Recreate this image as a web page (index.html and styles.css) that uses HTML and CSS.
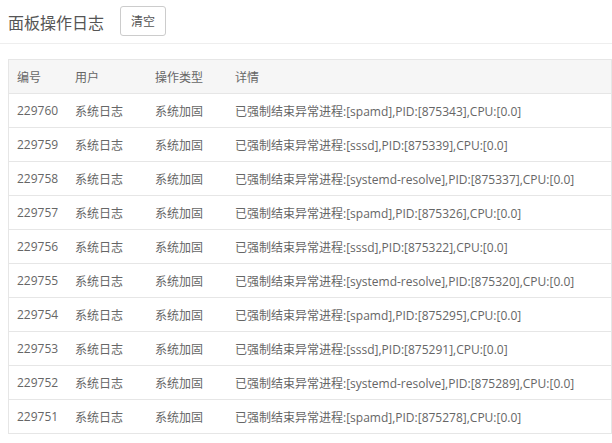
FILE: index.html
```html
<!DOCTYPE html>
<html lang="zh-CN">
<head>
    <meta charset="UTF-8">
    <title>面板操作日志</title>
    <link rel="stylesheet" href="styles.css">
</head>
<body>
    <div class="top-bar">
        <span class="title">面板操作日志</span>
        <button class="btn">清空</button>
    </div>

    <table class="log-table">
        <thead>
            <tr>
                <th class="col-id">编号</th>
                <th class="col-user">用户</th>
                <th class="col-type">操作类型</th>
                <th>详情</th>
            </tr>
        </thead>
        <tbody>
            <tr><td>229760</td><td>系统日志</td><td>系统加固</td><td>已强制结束异常进程:[spamd],PID:[875343],CPU:[0.0]</td></tr>
            <tr><td>229759</td><td>系统日志</td><td>系统加固</td><td>已强制结束异常进程:[sssd],PID:[875339],CPU:[0.0]</td></tr>
            <tr><td>229758</td><td>系统日志</td><td>系统加固</td><td>已强制结束异常进程:[systemd-resolve],PID:[875337],CPU:[0.0]</td></tr>
            <tr><td>229757</td><td>系统日志</td><td>系统加固</td><td>已强制结束异常进程:[spamd],PID:[875326],CPU:[0.0]</td></tr>
            <tr><td>229756</td><td>系统日志</td><td>系统加固</td><td>已强制结束异常进程:[sssd],PID:[875322],CPU:[0.0]</td></tr>
            <tr><td>229755</td><td>系统日志</td><td>系统加固</td><td>已强制结束异常进程:[systemd-resolve],PID:[875320],CPU:[0.0]</td></tr>
            <tr><td>229754</td><td>系统日志</td><td>系统加固</td><td>已强制结束异常进程:[spamd],PID:[875295],CPU:[0.0]</td></tr>
            <tr><td>229753</td><td>系统日志</td><td>系统加固</td><td>已强制结束异常进程:[sssd],PID:[875291],CPU:[0.0]</td></tr>
            <tr><td>229752</td><td>系统日志</td><td>系统加固</td><td>已强制结束异常进程:[systemd-resolve],PID:[875289],CPU:[0.0]</td></tr>
            <tr><td>229751</td><td>系统日志</td><td>系统加固</td><td>已强制结束异常进程:[spamd],PID:[875278],CPU:[0.0]</td></tr>
        </tbody>
    </table>
</body>
</html>
```

FILE: styles.css
```css
body {
    margin: 0;
    background: #fff;
    color: #666;
    font-family: "Open Sans", "Noto Sans CJK SC", sans-serif;
    font-size: 12px;
}
.top-bar {
    display: flex;
    align-items: center;
    height: 43px;
    padding-left: 8px;
    border-bottom: 1px solid #eee;
}
.title {
    font-size: 16px;
    color: #555;
    width: 112px;
}
.btn {
    height: 30px;
    width: 46px;
    padding: 0;
    background: #fff;
    border: 1px solid #ccc;
    border-radius: 3px;
    color: #555;
    font-family: inherit;
    font-size: 12px;
    margin-top: -1px;
}
.log-table {
    margin: 15px 0 0 8px;
    width: 604px;
    border-collapse: collapse;
    border: 1px solid #e6e6e6;
}
.log-table th,
.log-table td {
    height: 33px;
    padding: 0 0 0 8px;
    text-align: left;
    font-weight: normal;
    border-bottom: 1px solid #e6e6e6;
    white-space: nowrap;
}
.log-table thead th {
    background: #f6f6f6;
}
.col-id { width: 50px; }
.col-user { width: 72px; }
.col-type { width: 72px; }
```
